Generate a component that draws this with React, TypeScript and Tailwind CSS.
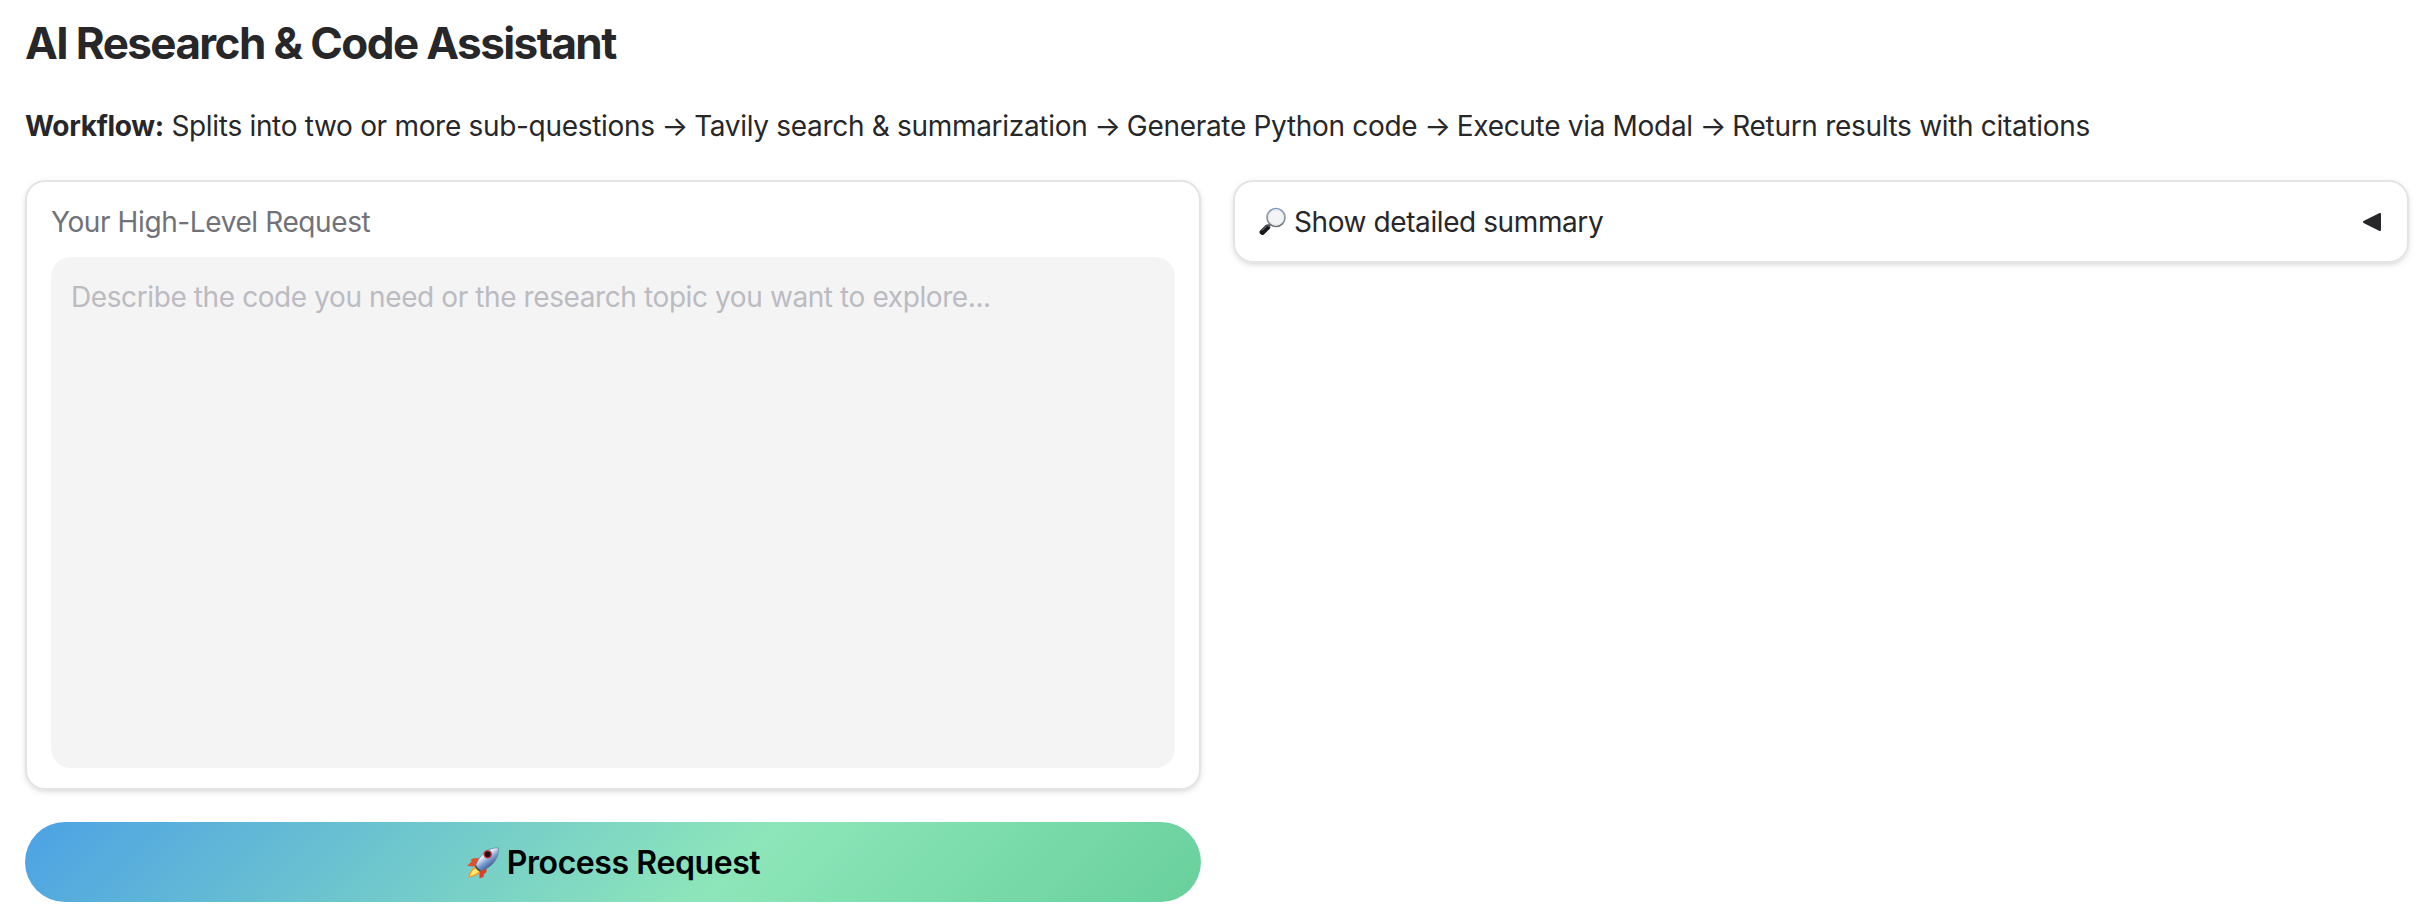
import React, { useState } from 'react';

function Magnifier() {
  return (
    <svg viewBox="0 0 30 30" className="h-[30px] w-[30px] shrink-0" aria-hidden="true">
      <defs>
        <linearGradient id="rim" x1="0" y1="0" x2="0" y2="1">
          <stop offset="0" stopColor="#7f9bc4" />
          <stop offset="0.4" stopColor="#9a9ea5" />
          <stop offset="1" stopColor="#707479" />
        </linearGradient>
      </defs>
      <path d="M4.3 25.2 L9.4 20.3" stroke="#14171b" strokeWidth="5.4" strokeLinecap="round" />
      <path d="M4 23.4 L8.6 19" stroke="#596069" strokeWidth="1.2" strokeLinecap="round" />
      <path d="M10 19.6 L12.4 17.2" stroke="#55595e" strokeWidth="2.8" />
      <circle cx="18" cy="10.5" r="9" fill="#f3f4f5" stroke="url(#rim)" strokeWidth="1.7" />
      <circle cx="18" cy="10.5" r="7.6" fill="none" stroke="#e0e3e7" strokeWidth="0.9" />
    </svg>
  );
}

function Rocket() {
  return (
    <svg viewBox="0 0 34 34" className="h-[34px] w-[34px] shrink-0" aria-hidden="true">
      <defs>
        <linearGradient id="hull" x1="0.3" y1="0.2" x2="0.7" y2="0.75">
          <stop offset="0" stopColor="#b4c6df" />
          <stop offset="0.25" stopColor="#e6eef8" />
          <stop offset="0.6" stopColor="#7fa3d3" />
          <stop offset="1" stopColor="#43609a" />
        </linearGradient>
      </defs>
      <path d="M13 13.5 C8 13 5.5 13.5 4.5 15 L6 16 L1 21 L10 21.5 Z" fill="#e0512a" />
      <path d="M20.5 23.5 C21 27 20 28 18 29 L17.5 32 L13.5 33.5 L13.5 26 Z" fill="#dd3f2a" />
      <path d="M9 22 C5 24 4 27.5 2 32.5 C8 31.5 12 30.5 14 27 Z" fill="#f0962a" />
      <path d="M9 23.5 C6 25.5 5 28 3.8 31 C8 30 11 29 13 26.5 Z" fill="#ffe765" />
      <path d="M32.5 3 C23 2 14.5 8.5 9.5 20.5 C10.5 23 12 25 14.5 26 C25 23 33 14.5 32.5 3 Z" fill="url(#hull)" stroke="#5f708c" strokeWidth="0.6" />
      <path d="M9.5 20.5 C10.5 23 12 25 14.5 26" fill="none" stroke="#4c4a55" strokeWidth="1.4" />
      <circle cx="21.7" cy="9.3" r="4.1" fill="#bf2530" />
      <circle cx="21.7" cy="9.3" r="2.7" fill="#17151a" />
    </svg>
  );
}

const steps = [
  'Splits into two or more sub-questions',
  'Tavily search & summarization',
  'Generate Python code',
  'Execute via Modal',
  'Return results with citations',
];

export default function App() {
  const [request, setRequest] = useState('');
  return (
    <main className="flex h-[920px] w-full flex-col bg-white pl-[25px] pr-[19px] font-[Inter,sans-serif] text-[28px] text-[#27272a]">
      <h1 className="mt-[13px] h-[60px] whitespace-nowrap text-[44px] font-[650] leading-[60px] tracking-[-0.036em]">
        AI Research &amp; Code Assistant
      </h1>
      <p className="mt-[32px] h-[42px] whitespace-nowrap leading-[42px] tracking-[-0.31px]">
        <strong className="font-bold">Workflow:</strong>{' '}
        {steps.map((step, i) => (
          <React.Fragment key={step}>
            {i > 0 && <span className="tracking-[-1px]"> → </span>}
            {step}
          </React.Fragment>
        ))}
      </p>
      <div className="mt-[33px] grid grid-cols-2 items-start gap-8">
        <div className="flex flex-col gap-8">
          <label className="flex h-[610px] flex-col rounded-[20px] border-2 border-[#e4e4e5] px-6 pt-[19px] shadow-[0_2px_6px_rgba(0,0,0,0.1),0_2px_4px_-2px_rgba(0,0,0,0.1)]">
            <span className="h-[42px] leading-[42px] tracking-[-0.4px] text-[#71717a]">Your High-Level Request</span>
            <textarea
              value={request}
              onChange={(e) => setRequest(e.target.value)}
              placeholder="Describe the code you need or the research topic you want to explore..."
              className="mt-[14px] h-[511px] resize-none rounded-[20px] bg-[#f4f4f4] px-5 py-[19px] leading-[42px] tracking-[-0.4px] outline-none placeholder:text-[#bbbbc2]"
            />
          </label>
          <button className="flex h-20 items-center justify-center gap-[7px] rounded-full bg-[linear-gradient(135deg,#4ca2e4_0%,#8de6b9_60%,#68d09c_100%)] text-[32px] font-semibold text-black">
            <Rocket />
            <span className="pt-[2px] tracking-[-0.41px]">Process Request</span>
          </button>
        </div>
        <button className="flex h-[83px] items-center justify-between rounded-[20px] border-2 border-[#e4e4e5] pl-[23px] pr-[26px] shadow-[0_2px_6px_rgba(0,0,0,0.1),0_2px_4px_-2px_rgba(0,0,0,0.1)]">
          <span className="flex items-center gap-[6px]">
            <Magnifier />
            <span className="tracking-[-0.41px]">Show detailed summary</span>
          </span>
          <svg viewBox="0 0 18 18" className="h-[18px] w-[18px]" aria-hidden="true">
            <path d="M1 9 L17 1 V17 Z" fill="#27272a" stroke="#27272a" strokeWidth="2" strokeLinejoin="round" />
          </svg>
        </button>
      </div>
    </main>
  );
}
